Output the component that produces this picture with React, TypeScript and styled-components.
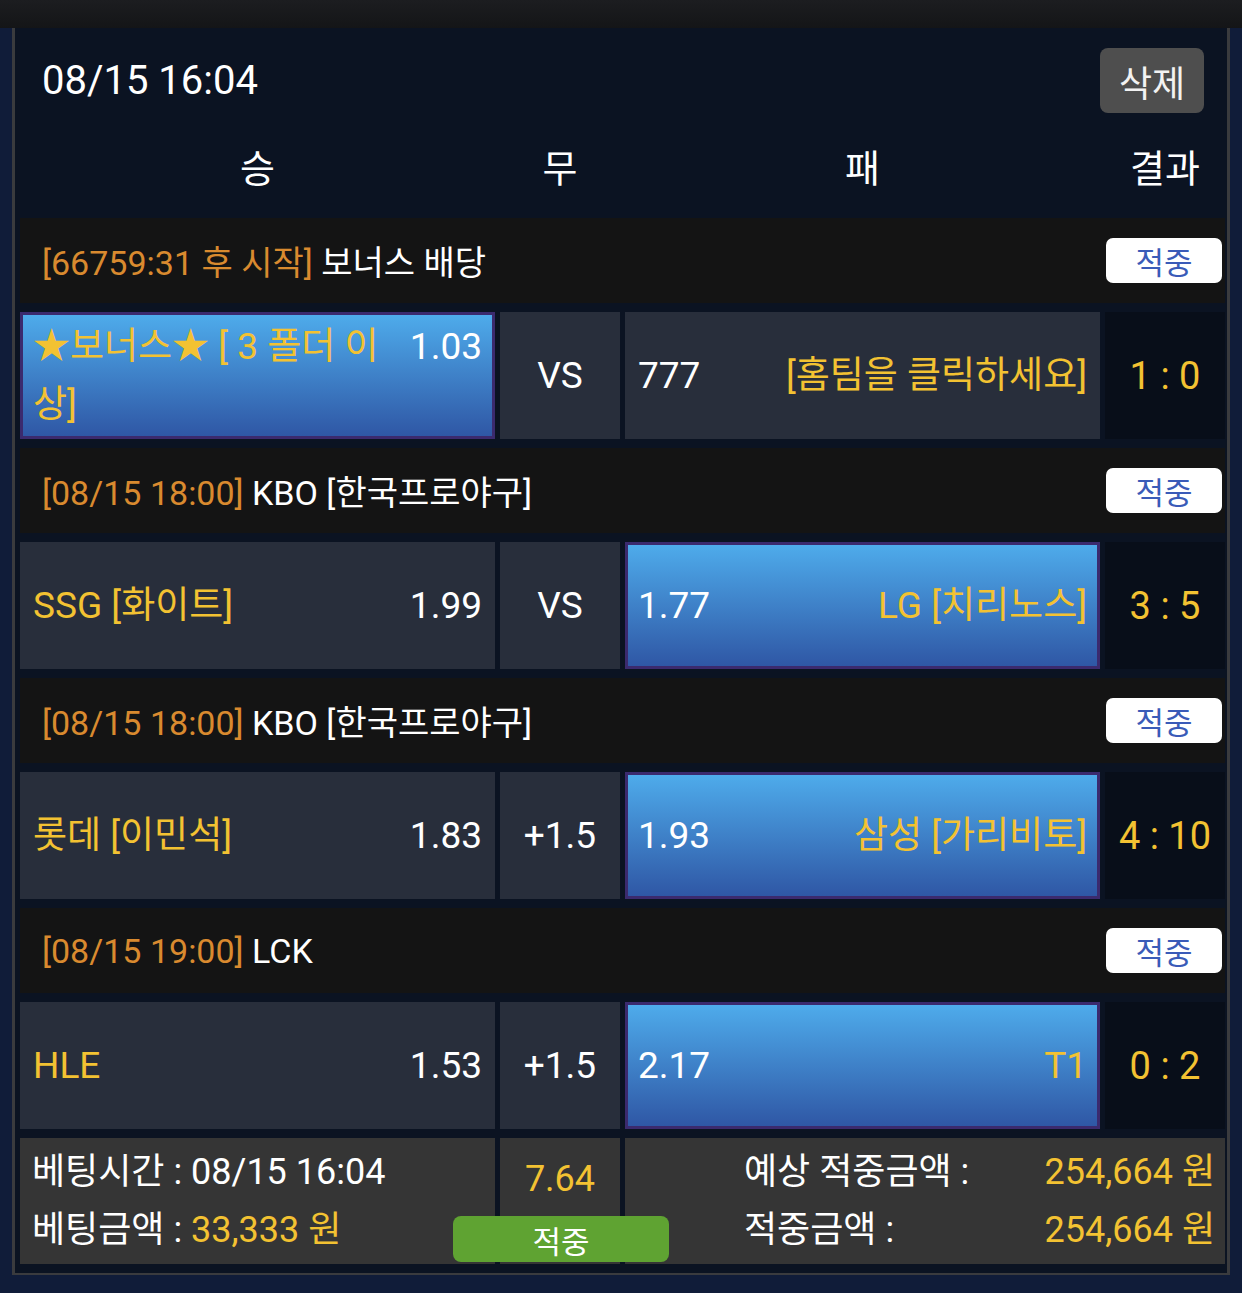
import React from 'react';
import styled, { createGlobalStyle } from 'styled-components';

const GlobalStyle = createGlobalStyle`
	html, body {
		margin: 0;
		padding: 0;
		background: #101c39;
	}
	body {
		font-family: Roboto, "Noto Sans CJK KR", sans-serif;
		color: #fff;
	}
	* {
		box-sizing: border-box;
	}
`;

const COLUMNS = '475px 120px 475px 1fr';
const YELLOW = '#f3c232';
const ORANGE = '#d98a2f';

const Page = styled.div`
	width: 1242px;
	min-height: 1293px;
	background: #101c39;
`;

const TopStrip = styled.div`
	height: 28px;
	background: linear-gradient(#1c1d20, #141517);
`;

const Panel = styled.section`
	margin: 0 12px;
	background: #0b1322;
	border: 3px solid #3a3b3e;
	border-top: none;
	border-bottom-width: 2px;
	padding: 20px 2px 9px 5px;
`;

const TopRow = styled.div`
	display: flex;
	align-items: center;
	justify-content: space-between;
	height: 65px;
	padding: 0 21px 0 22px;
`;

const DateTitle = styled.div`
	font-size: 40px;
	line-height: 1;
`;

const DeleteButton = styled.button`
	width: 104px;
	height: 65px;
	border: none;
	border-radius: 8px;
	background: #4e4e4e;
	color: #f2f2f2;
	font-family: inherit;
	font-size: 36px;
	padding: 0;
`;

const ColumnHeads = styled.div`
	display: grid;
	grid-template-columns: ${COLUMNS};
	gap: 5px;
	height: 105px;
	align-items: center;
`;

const ColumnLabel = styled.div`
	text-align: center;
	font-size: 38px;
`;

const Board = styled.div`
	display: flex;
	flex-direction: column;
	gap: 9px;
`;

const SectionHead = styled.div`
	height: 85px;
	background: #141414;
	display: flex;
	align-items: center;
	justify-content: space-between;
	padding: 0 3px 0 22px;
`;

const SectionTitle = styled.div`
	font-size: 34px;
	white-space: nowrap;
`;

const Accent = styled.span<{ $color: string }>`
	color: ${(p) => p.$color};
`;

const HitBadge = styled.div`
	width: 116px;
	height: 45px;
	border-radius: 7px;
	background: #fff;
	color: #3a5bb8;
	font-size: 31px;
	display: flex;
	align-items: center;
	justify-content: center;
`;

const MatchRow = styled.div`
	display: grid;
	grid-template-columns: ${COLUMNS};
	gap: 5px;
	height: 127px;
`;

const TeamCell = styled.div<{ $picked?: boolean }>`
	display: flex;
	align-items: center;
	padding: 0 ${(p) => (p.$picked ? 10 : 13)}px;
	background: ${(p) =>
		p.$picked ? 'linear-gradient(#4eabeb, #2f57a5)' : '#282e3b'};
	border: ${(p) => (p.$picked ? '3px solid #3b2a6e' : 'none')};
`;

const TeamLine = styled.div`
	display: flex;
	align-items: flex-start;
	justify-content: space-between;
	gap: 28px;
	width: 100%;
	font-size: 37px;
	line-height: 58px;
`;

const TeamName = styled.span`
	color: ${YELLOW};
`;

const Odds = styled.span`
	color: #fff;
	white-space: nowrap;
	flex-shrink: 0;
`;

const MidCell = styled.div`
	display: flex;
	align-items: center;
	justify-content: center;
	background: #282e3b;
	font-size: 37px;
`;

const ScoreCell = styled.div`
	display: flex;
	align-items: center;
	justify-content: center;
	background: #080e19;
	color: ${YELLOW};
	font-size: 38px;
	white-space: pre;
`;

const Summary = styled.div`
	position: relative;
	display: grid;
	grid-template-columns: ${COLUMNS};
	gap: 5px;
	height: 126px;
`;

const SummaryCell = styled.div`
	background: #353535;
	font-size: 36px;
	line-height: 58px;
`;

const BetInfo = styled(SummaryCell)`
	display: flex;
	flex-direction: column;
	justify-content: center;
	padding-left: 12px;
	white-space: nowrap;
`;

const TotalOdds = styled(SummaryCell)`
	text-align: center;
	color: ${YELLOW};
	padding-top: 20px;
	line-height: 42px;
`;

const Payout = styled(SummaryCell)`
	grid-column: span 2;
	display: grid;
	grid-template-columns: auto 1fr;
	align-content: center;
	padding: 0 10px 0 119px;
	white-space: nowrap;
`;

const PayoutValue = styled.span`
	justify-self: end;
	color: ${YELLOW};
`;

const ResultTag = styled.div`
	position: absolute;
	left: 433px;
	top: 78px;
	width: 216px;
	height: 46px;
	border-radius: 8px;
	background: #5fa332;
	color: #fff;
	font-size: 31px;
	display: flex;
	align-items: center;
	justify-content: center;
`;

type Match = {
	time: string;
	league: string;
	home: string;
	homeOdds: string;
	mid: string;
	awayOdds: string;
	away: string;
	score: string;
	pick: 'home' | 'away' | null;
};

const matches: Match[] = [
	{
		time: '[66759:31 후 시작]',
		league: '보너스 배당',
		home: '★보너스★ [ 3 폴더 이상]',
		homeOdds: '1.03',
		mid: 'VS',
		awayOdds: '777',
		away: '[홈팀을 클릭하세요]',
		score: '1 : 0',
		pick: 'home',
	},
	{
		time: '[08/15 18:00]',
		league: 'KBO [한국프로야구]',
		home: 'SSG [화이트]',
		homeOdds: '1.99',
		mid: 'VS',
		awayOdds: '1.77',
		away: 'LG [치리노스]',
		score: '3 : 5',
		pick: 'away',
	},
	{
		time: '[08/15 18:00]',
		league: 'KBO [한국프로야구]',
		home: '롯데 [이민석]',
		homeOdds: '1.83',
		mid: '+1.5',
		awayOdds: '1.93',
		away: '삼성 [가리비토]',
		score: '4 : 10',
		pick: 'away',
	},
	{
		time: '[08/15 19:00]',
		league: 'LCK',
		home: 'HLE',
		homeOdds: '1.53',
		mid: '+1.5',
		awayOdds: '2.17',
		away: 'T1',
		score: '0 : 2',
		pick: 'away',
	},
];

export default function App() {
	return (
		<Page>
			<GlobalStyle />
			<TopStrip />
			<Panel>
				<TopRow>
					<DateTitle>08/15 16:04</DateTitle>
					<DeleteButton>삭제</DeleteButton>
				</TopRow>
				<ColumnHeads>
					<ColumnLabel>승</ColumnLabel>
					<ColumnLabel>무</ColumnLabel>
					<ColumnLabel>패</ColumnLabel>
					<ColumnLabel>결과</ColumnLabel>
				</ColumnHeads>
				<Board>
					{matches.map((m, i) => (
						<React.Fragment key={i}>
							<SectionHead>
								<SectionTitle>
									<Accent $color={ORANGE}>{m.time}</Accent> {m.league}
								</SectionTitle>
								<HitBadge>적중</HitBadge>
							</SectionHead>
							<MatchRow>
								<TeamCell $picked={m.pick === 'home'}>
									<TeamLine>
										<TeamName>{m.home}</TeamName>
										<Odds>{m.homeOdds}</Odds>
									</TeamLine>
								</TeamCell>
								<MidCell>{m.mid}</MidCell>
								<TeamCell $picked={m.pick === 'away'}>
									<TeamLine>
										<Odds>{m.awayOdds}</Odds>
										<TeamName>{m.away}</TeamName>
									</TeamLine>
								</TeamCell>
								<ScoreCell>{m.score}</ScoreCell>
							</MatchRow>
						</React.Fragment>
					))}
					<Summary>
						<BetInfo>
							<div>베팅시간 : 08/15 16:04</div>
							<div>
								베팅금액 : <Accent $color={YELLOW}>33,333 원</Accent>
							</div>
						</BetInfo>
						<TotalOdds>7.64</TotalOdds>
						<Payout>
							<span>예상 적중금액 :</span>
							<PayoutValue>254,664 원</PayoutValue>
							<span>적중금액 :</span>
							<PayoutValue>254,664 원</PayoutValue>
						</Payout>
						<ResultTag>적중</ResultTag>
					</Summary>
				</Board>
			</Panel>
		</Page>
	);
}
